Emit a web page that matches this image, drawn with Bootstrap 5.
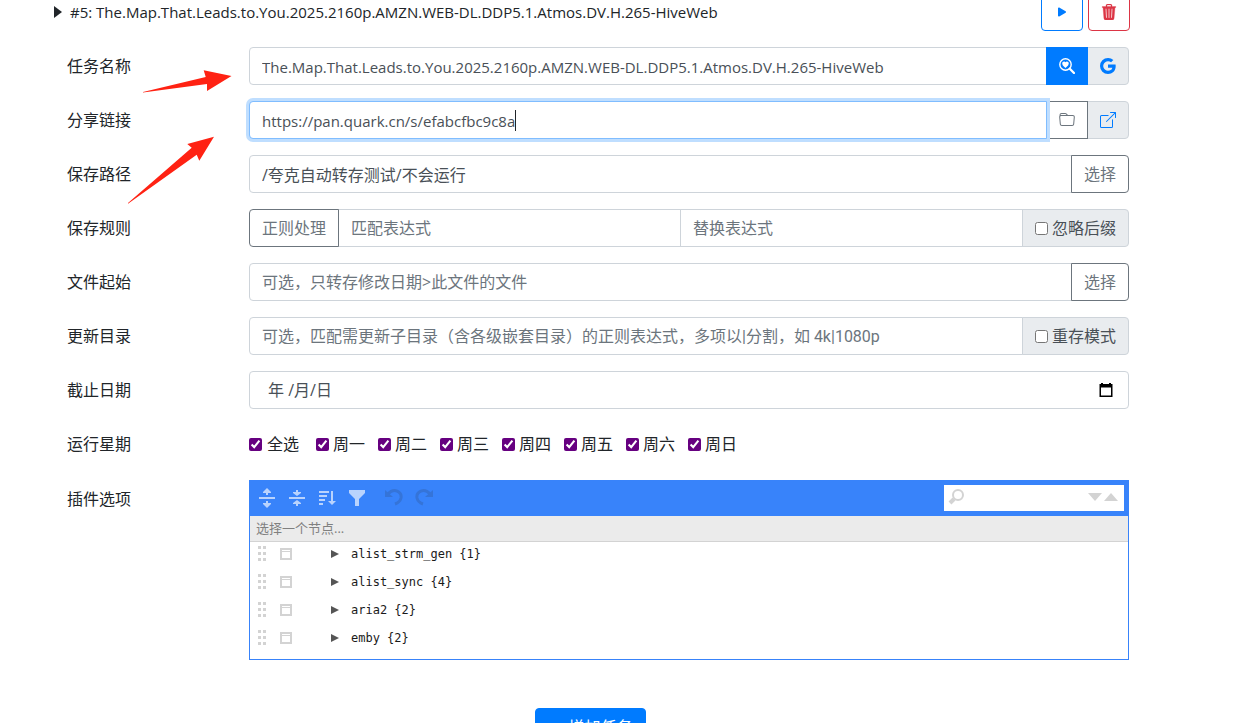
<!DOCTYPE html>
<html lang="zh-CN">
<head>
<meta charset="utf-8">
<meta name="viewport" content="width=device-width, initial-scale=1">
<title>任务</title>
<link href="https://cdn.jsdelivr.net/npm/bootstrap@5.3.0/dist/css/bootstrap.min.css" rel="stylesheet">
<style>
:root{--bs-border-radius:4px;--line:#ced4da;--tool:#3883fa}
html,body{height:100%;overflow:hidden}
body{font-family:"Open Sans","Noto Sans CJK SC",sans-serif;color:#212529;line-height:24px}
.page{padding:0 107px 0 67px;margin-top:-7px}
.task-head{margin:0 -1px 16px -14px;gap:5px}
.task-head a{color:#212529;gap:8px;font-size:15px}
.task-row{--bs-gutter-x:30px;margin-bottom:16px}
.task-row.plugin-row{margin-bottom:0;padding-top:1px}
.form-control,.form-control:focus{color:#495057}
.form-control{border-color:var(--line);height:38px;border-radius:4px}
.form-control::placeholder{color:#6c757d}
.form-control.latin{font-size:15px;padding-top:8px}
.form-control.mixed{font-family:Roboto,"Noto Sans CJK SC",sans-serif}
.input-group-text{background:#e9ecef;border-color:var(--line);color:#495057;border-radius:4px;gap:4px}
.form-control.is-active,.form-control.is-active:focus{border-color:#80bdff;box-shadow:0 0 0 3px #bfdeff;position:relative;z-index:6;caret-color:transparent}
.text-caret{position:absolute;left:267px;top:9px;width:1px;height:21px;background:#212529;z-index:7}
.btn{border-radius:4px}
.btn-primary{--bs-btn-bg:#007bff;--bs-btn-border-color:#007bff}
.btn-outline-primary{--bs-btn-color:#007bff;--bs-btn-border-color:#007bff}
.btn-outline-secondary{--bs-btn-color:#6c757d;--bs-btn-border-color:#6c757d}
.btn svg,.input-group-text svg{display:block;width:16px;height:16px}
.blue-link{color:#007bff}
.btn-icon{height:38px;width:42px;padding:0 12px}
input[type=checkbox]{width:13px;height:13px;margin:0;flex:none}
.weekdays{height:38px}
.weekdays input{accent-color:#660080}
.weekdays label{gap:4px;margin-right:13px}
.weekdays label.every{gap:5px;margin-right:17px}
.date-box{padding:0 14px 0 18px}
.date-box input{outline:0;color:inherit}
.editor{border:1px solid var(--tool);height:180px}
.editor-menu{background:var(--tool);height:35px;padding:0 4px 1px 2px}
.editor-menu button{width:30px;height:30px;padding:0 0 3px;border:0;background:none;color:#b9d3fd}
.editor-menu button:disabled{color:#3574d8}
.editor-menu svg{flex:none}
.finder{width:180px;height:26px;background:#fff;color:#d3d3d3;padding:0 6px 2px 4px}
.finder input{outline:0;min-width:0}
.crumb{height:26px;background:#ebebeb;border-bottom:1px solid #d3d3d3;color:#808080;font-size:13px;padding-left:6px;line-height:25px}
.tree li{height:28px;font:12px/24px "DejaVu Sans Mono",monospace;color:#1a1a1a;padding-left:7px}
.tree svg{flex:none}
.marks{position:absolute;left:120px;top:60px;pointer-events:none;z-index:9}
.foot{padding-top:48px;margin-left:-15px}
.add{height:38px;gap:4px}
</style>
</head>
<body>
<main class="page">
  <div class="task-head d-flex align-items-center">
    <a href="#" class="d-flex align-items-center flex-grow-1 text-decoration-none"><svg width="9" height="12" viewBox="0 0 9 12" fill="currentColor"><path d="M1 0v12l8-6z"/></svg><span>#5: The.Map.That.Leads.to.You.2025.2160p.AMZN.WEB-DL.DDP5.1.Atmos.DV.H.265-HiveWeb</span></a>
    <button class="btn btn-outline-primary btn-icon" aria-label="运行"><svg viewBox="0 0 16 16" fill="currentColor"><path d="m11.596 8.697-6.363 3.692c-.54.313-1.233-.066-1.233-.697V4.308c0-.63.692-1.01 1.233-.696l6.363 3.692a.802.802 0 0 1 0 1.393z"/></svg></button>
    <button class="btn btn-outline-danger btn-icon" aria-label="删除"><svg viewBox="0 0 16 16" fill="currentColor" stroke="currentColor" stroke-width=".3"><path d="M11 1.5v1h3.5a.5.5 0 0 1 0 1h-.538l-.853 10.66A2 2 0 0 1 11.115 16h-6.23a2 2 0 0 1-1.994-1.84L2.038 3.5H1.5a.5.5 0 0 1 0-1H5v-1A1.5 1.5 0 0 1 6.5 0h3A1.5 1.5 0 0 1 11 1.5Zm-5 0v1h4v-1a.5.5 0 0 0-.5-.5h-3a.5.5 0 0 0-.5.5ZM4.5 5.029l.5 8.5a.5.5 0 1 0 .998-.06l-.5-8.5a.5.5 0 1 0-.998.06Zm6.53-.528a.5.5 0 0 0-.528.47l-.5 8.5a.5.5 0 0 0 .998.058l.5-8.5a.5.5 0 0 0-.47-.528ZM8 4.5a.5.5 0 0 0-.5.5v8.5a.5.5 0 0 0 1 0V5a.5.5 0 0 0-.5-.5Z"/></svg></button>
  </div>

  <form>
  <div class="row task-row"><label class="col-2 col-form-label" for="name">任务名称</label><div class="col-10"><div class="input-group">
    <input id="name" class="form-control latin" value="The.Map.That.Leads.to.You.2025.2160p.AMZN.WEB-DL.DDP5.1.Atmos.DV.H.265-HiveWeb">
    <button type="button" class="btn btn-primary btn-icon" aria-label="搜索"><svg viewBox="0 0 16 16" fill="currentColor"><path d="M6.5 4.2c2-2 6.2 1.4 0 5.8C.3 5.6 4.5 2.2 6.5 4.2Z"/><circle cx="6.5" cy="6.5" r="5.7" fill="none" stroke="currentColor" stroke-width="1.4"/><path d="M10.8 10.8l4.2 4.2" stroke="currentColor" stroke-width="2.3" stroke-linecap="round"/></svg></button>
    <a href="#" class="input-group-text blue-link" aria-label="Google"><svg viewBox="0 0 16 16" fill="currentColor"><path d="M15.545 6.558a9.42 9.42 0 0 1 .139 1.626c0 2.434-.87 4.492-2.384 5.885h.002C11.978 15.292 10.158 16 8 16A8 8 0 1 1 8 0a7.689 7.689 0 0 1 5.352 2.082l-2.284 2.284A4.347 4.347 0 0 0 8 3.166c-2.087 0-3.86 1.408-4.492 3.304a4.792 4.792 0 0 0 0 3.063h.003c.635 1.893 2.405 3.301 4.492 3.301 1.078 0 2.004-.276 2.722-.764h-.003a3.702 3.702 0 0 0 1.599-2.431H8v-3.08h7.545z"/></svg></a>
  </div></div></div>

  <div class="row task-row"><label class="col-2 col-form-label" for="link">分享链接</label><div class="col-10"><div class="input-group">
    <input id="link" class="form-control latin is-active" value="https://pan.quark.cn/s/efabcfbc9c8a" autofocus>
    <span class="text-caret" aria-hidden="true"></span>
    <button type="button" class="btn btn-outline-secondary btn-icon" aria-label="文件夹"><svg viewBox="0 0 16 16" fill="currentColor"><path d="M.54 3.87.5 3a2 2 0 0 1 2-2h3.672a2 2 0 0 1 1.414.586l.828.828A2 2 0 0 0 9.828 3h3.982a2 2 0 0 1 1.992 2.181l-.637 7A2 2 0 0 1 13.174 14H2.826a2 2 0 0 1-1.991-1.819l-.637-7a1.99 1.99 0 0 1 .342-1.31zM2.19 4a1 1 0 0 0-.996 1.09l.637 7a1 1 0 0 0 .995.91h10.348a1 1 0 0 0 .995-.91l.637-7A1 1 0 0 0 13.81 4H2.19zm4.69-1.707A1 1 0 0 0 6.172 2H2.5a1 1 0 0 0-1 .981l.006.139C1.72 3.042 1.95 3 2.19 3h5.396l-.707-.707z"/></svg></button>
    <a href="#" class="input-group-text blue-link" aria-label="打开链接"><svg viewBox="0 0 16 16" fill="currentColor"><path d="M8.636 3.5a.5.5 0 0 0-.5-.5H1.5A1.5 1.5 0 0 0 0 4.5v10A1.5 1.5 0 0 0 1.5 16h10a1.5 1.5 0 0 0 1.5-1.5V7.864a.5.5 0 0 0-1 0V14.5a.5.5 0 0 1-.5.5h-10a.5.5 0 0 1-.5-.5v-10a.5.5 0 0 1 .5-.5h6.636a.5.5 0 0 0 .5-.5z"/><path d="M16 .5a.5.5 0 0 0-.5-.5h-5a.5.5 0 0 0 0 1h3.793L6.146 9.146a.5.5 0 1 0 .708.708L15 1.707V5.5a.5.5 0 0 0 1 0v-5z"/></svg></a>
  </div></div></div>

  <div class="row task-row"><label class="col-2 col-form-label" for="path">保存路径</label><div class="col-10"><div class="input-group">
    <input id="path" class="form-control" value="/夸克自动转存测试/不会运行"><button type="button" class="btn btn-outline-secondary">选择</button>
  </div></div></div>

  <div class="row task-row"><label class="col-2 col-form-label" for="match">保存规则</label><div class="col-10"><div class="input-group">
    <button type="button" class="btn btn-outline-secondary">正则处理</button>
    <input id="match" class="form-control" placeholder="匹配表达式"><input class="form-control" placeholder="替换表达式" aria-label="替换表达式">
    <label class="input-group-text"><input type="checkbox">忽略后缀</label>
  </div></div></div>

  <div class="row task-row"><label class="col-2 col-form-label" for="start">文件起始</label><div class="col-10"><div class="input-group">
    <input id="start" class="form-control" placeholder="可选，只转存修改日期&gt;此文件的文件"><button type="button" class="btn btn-outline-secondary">选择</button>
  </div></div></div>

  <div class="row task-row"><label class="col-2 col-form-label" for="update">更新目录</label><div class="col-10"><div class="input-group">
    <input id="update" class="form-control mixed" placeholder="可选，匹配需更新子目录（含各级嵌套目录）的正则表达式，多项以|分割，如 4k|1080p">
    <label class="input-group-text"><input type="checkbox">重存模式</label>
  </div></div></div>

  <div class="row task-row"><label class="col-2 col-form-label" for="until">截止日期</label><div class="col-10"><div class="form-control date-box d-flex align-items-center">
    <input id="until" class="border-0 p-0 flex-grow-1" value="年 /月/日"><button type="button" class="border-0 bg-transparent p-0 d-flex" aria-label="日历"><svg width="16" height="16" viewBox="0 0 16 16"><path fill="#000" fill-rule="evenodd" d="M3 1h2v1h6V1h2v1h1.5v13h-13V2H3zM3 5.5v8h10v-8z"/></svg></button>
  </div></div></div>

  <div class="row task-row"><span class="col-2 col-form-label">运行星期</span><div class="col-10"><div class="weekdays d-flex align-items-center">
    <label class="every d-flex align-items-center"><input type="checkbox" checked>全选</label>
    <label class="d-flex align-items-center"><input type="checkbox" checked>周一</label>
    <label class="d-flex align-items-center"><input type="checkbox" checked>周二</label>
    <label class="d-flex align-items-center"><input type="checkbox" checked>周三</label>
    <label class="d-flex align-items-center"><input type="checkbox" checked>周四</label>
    <label class="d-flex align-items-center"><input type="checkbox" checked>周五</label>
    <label class="d-flex align-items-center"><input type="checkbox" checked>周六</label>
    <label class="d-flex align-items-center"><input type="checkbox" checked>周日</label>
  </div></div></div>

  <div class="row task-row plugin-row"><span class="col-2 col-form-label">插件选项</span><div class="col-10"><div class="editor">
    <div class="editor-menu d-flex align-items-center">
      <button type="button" aria-label="展开"><svg width="20" height="20" viewBox="0 0 20 20" fill="currentColor"><path d="M2 9h16v2H2zM10 0l4 4v1h-3v2H9V5H6V4zM10 20l-4-4v-1h3v-2h2v2h3v1z"/></svg></button>
      <button type="button" aria-label="折叠"><svg width="20" height="20" viewBox="0 0 20 20" fill="currentColor"><path d="M2 9h16v2H2zM10 8L6 5V4h3V2h2v2h3v1zM10 12l4 3v1h-3v2H9v-2H6v-1z"/></svg></button>
      <button type="button" aria-label="排序"><svg width="20" height="20" viewBox="0 0 20 20" fill="currentColor"><path d="M2 3h10v2H2zM2 7h8v2H2zM2 11h6v2H2zM2 15h4v2H2zM14 3h2v10h3l-4 4-4-4h3z"/></svg></button>
      <button type="button" aria-label="筛选"><svg width="20" height="20" viewBox="0 0 20 20" fill="currentColor"><path d="M2 2h16v3l-6 6v7H8v-7L2 5z"/></svg></button>
      <button type="button" class="ms-2" disabled aria-label="撤销"><svg width="20" height="20" viewBox="0 0 20 20"><path fill="none" stroke="currentColor" stroke-width="3" d="M3 6c6-7 14-2 13 4-1 4-3 5-6 6"/><path fill="currentColor" d="M0 2v7h8z"/></svg></button>
      <button type="button" disabled aria-label="重做"><svg width="20" height="20" viewBox="0 0 20 20"><path fill="none" stroke="currentColor" stroke-width="3" d="M15 6C9-1 1 4 2 10c1 4 3 5 6 6"/><path fill="currentColor" d="M18 2v7h-8z"/></svg></button>
      <div class="finder d-flex align-items-center ms-auto"><svg width="18" height="18" viewBox="0 0 18 18"><circle cx="10" cy="7" r="5" fill="none" stroke="currentColor" stroke-width="2"/><path d="M6 11l-4 4" stroke="currentColor" stroke-width="4"/></svg><input class="border-0 bg-transparent flex-grow-1 p-0" aria-label="查找"><svg width="30" height="10" viewBox="0 0 30 10" fill="currentColor"><path d="M0 1h14l-7 8zM16 9h14l-7-8z"/></svg></div>
    </div>
    <div class="crumb">选择一个节点...</div>
    <ul class="tree list-unstyled m-0" id="tree"></ul>
  </div></div></div>
  </form>
  <div class="foot d-flex justify-content-center"><button class="btn btn-primary add d-flex align-items-center"><svg viewBox="0 0 16 16" fill="currentColor"><path d="M8 4a.5.5 0 0 1 .5.5v3h3a.5.5 0 0 1 0 1h-3v3a.5.5 0 0 1-1 0v-3h-3a.5.5 0 0 1 0-1h3v-3A.5.5 0 0 1 8 4z"/></svg>增加任务</button></div>
</main>
<svg class="marks" width="120" height="150" viewBox="120 60 120 150" fill="#ff2213" aria-hidden="true"><path d="M143 92l62.7-15-2-6.7L231.5 76 207 91v-7l-64 8.5zM128 203l63.7-55.3-4.4-3.7L214 136.7l-14.7 24-2.6-6-68.7 49z"/></svg>
<script src="https://cdn.jsdelivr.net/npm/bootstrap@5.3.0/dist/js/bootstrap.bundle.min.js"></script>
<script>
document.getElementById('tree').innerHTML = ['alist_strm_gen {1}','alist_sync {4}','aria2 {2}','emby {2}'].map(function(t){
  return '<li class="d-flex align-items-start"><svg width="94" height="24" viewBox="0 0 94 24"><path fill="#d3d3d3" d="M1 4h3v3H1zM6 4h3v3H6zM1 10h3v3H1zM6 10h3v3H6zM1 16h3v3H1zM6 16h3v3H6z"/><path fill="none" stroke="#d3d3d3" stroke-width="2" d="M24 7h10v10H24z"/><path fill="#d3d3d3" d="M24 9h10v1H24z"/><path fill="#555" d="M74 8v8l8-4z"/></svg><span>'+t+'</span></li>';
}).join('');
</script>
</body>
</html>
